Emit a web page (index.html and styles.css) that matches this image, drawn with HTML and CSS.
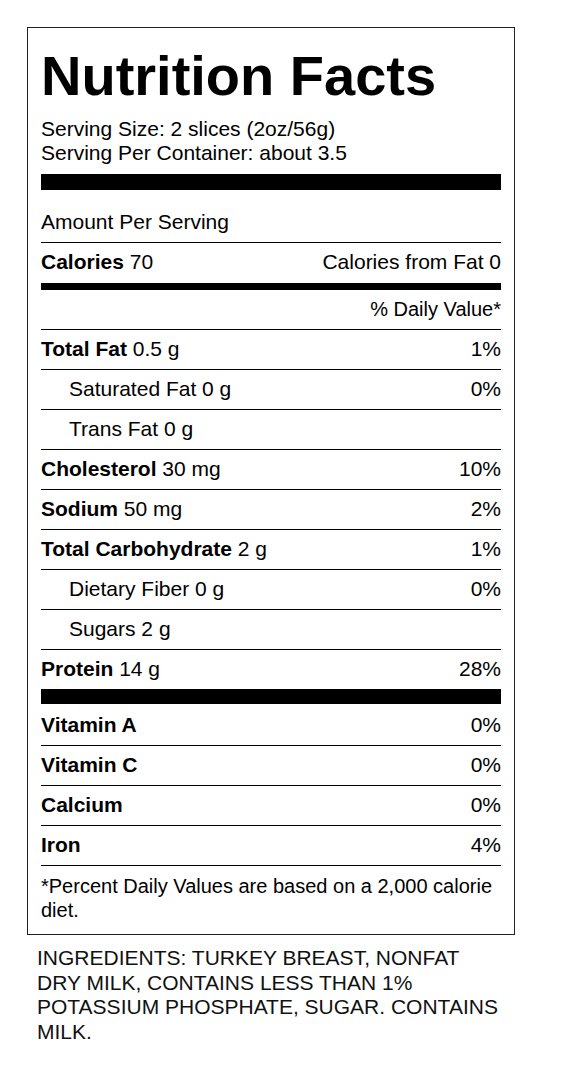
FILE: index.html
```html
<!DOCTYPE html>
<html>
<head>
    <title>Nutrition Facts</title>
    <link rel="stylesheet" href="styles.css">
</head>
<body>
    <div class="label">
        <h1 class="title">Nutrition Facts</h1>
        <p class="serving">Serving Size: 2 slices (2oz/56g)<br>Serving Per Container: about 3.5</p>
        <div class="bar bar-top"></div>

        <div class="row row-amount"><span>Amount Per Serving</span></div>
        <div class="row"><span><b>Calories</b> 70</span><span>Calories from Fat 0</span></div>
        <div class="bar bar-medium"></div>

        <div class="row row-dv"><span></span><span>% Daily Value*</span></div>
        <div class="row"><span><b>Total Fat</b> 0.5 g</span><span>1%</span></div>
        <div class="row sub"><span>Saturated Fat 0 g</span><span>0%</span></div>
        <div class="row sub"><span>Trans Fat 0 g</span><span></span></div>
        <div class="row"><span><b>Cholesterol</b> 30 mg</span><span>10%</span></div>
        <div class="row"><span><b>Sodium</b> 50 mg</span><span>2%</span></div>
        <div class="row"><span><b>Total Carbohydrate</b> 2 g</span><span>1%</span></div>
        <div class="row sub"><span>Dietary Fiber 0 g</span><span>0%</span></div>
        <div class="row sub"><span>Sugars 2 g</span><span></span></div>
        <div class="row"><span><b>Protein</b> 14 g</span><span>28%</span></div>
        <div class="bar bar-vitamins"></div>

        <div class="row row-first"><span><b>Vitamin A</b></span><span>0%</span></div>
        <div class="row"><span><b>Vitamin C</b></span><span>0%</span></div>
        <div class="row"><span><b>Calcium</b></span><span>0%</span></div>
        <div class="row"><span><b>Iron</b></span><span>4%</span></div>

        <p class="footnote">*Percent Daily Values are based on a 2,000 calorie diet.</p>
    </div>

    <p class="ingredients">INGREDIENTS: TURKEY BREAST, NONFAT DRY MILK, CONTAINS LESS THAN 1% POTASSIUM PHOSPHATE, SUGAR. CONTAINS MILK.</p>
</body>
</html>
```

FILE: styles.css
```css
body {
    font-family: "Liberation Sans", Arial, Helvetica, sans-serif;
    font-size: 21px;
    color: #000;
    background-color: #fff;
    margin: 0;
}

.label {
    width: 460px;
    margin: 27px 0 0 27px;
    padding: 0 13px 12px;
    border: 1px solid #222;
}

.title {
    font-size: 56px;
    font-weight: bold;
    line-height: 56px;
    margin: 20px 0 0;
}

.serving {
    line-height: 24px;
    margin: 13px 0 0;
}

.bar {
    background-color: #000;
}

.bar-top {
    height: 16px;
    margin-top: 9px;
}

.bar-medium {
    height: 7px;
    margin-top: 1px;
}

.bar-vitamins {
    height: 15px;
}

.row {
    display: flex;
    justify-content: space-between;
    line-height: 24px;
    padding: 7px 0 8px;
    border-top: 1px solid #000;
}

.bar + .row {
    border-top: none;
}

.row-amount {
    padding-top: 20px;
}

.row-dv {
    font-size: 20px;
}

.row-first {
    padding-top: 9px;
}

.row b {
    font-weight: bold;
}

.row.sub span:first-child {
    padding-left: 28px;
}

.footnote {
    font-size: 20px;
    line-height: 24px;
    margin: 0;
    padding-top: 8px;
    border-top: 1px solid #000;
}

.ingredients {
    width: 466px;
    margin: 11px 0 0 37px;
    line-height: 24.7px;
    color: #111;
}
```
